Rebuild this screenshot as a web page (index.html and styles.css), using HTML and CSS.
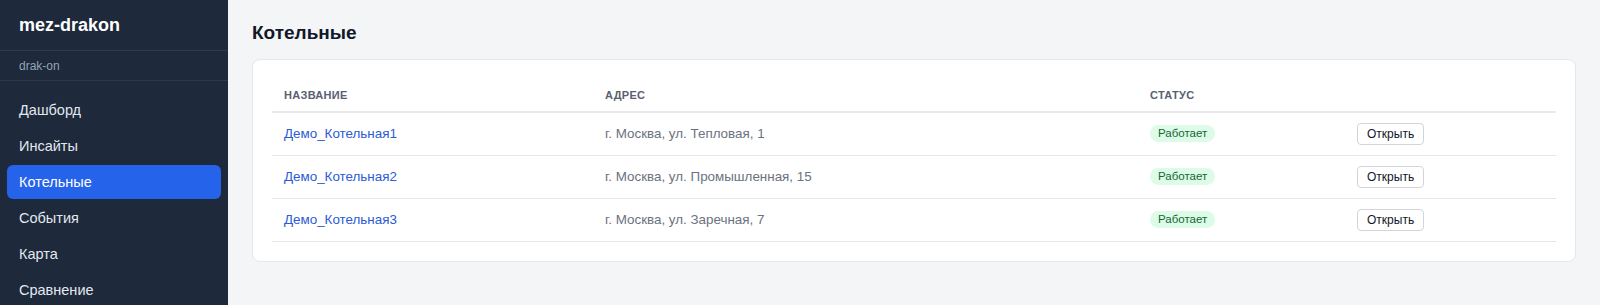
FILE: index.html
```html
<!DOCTYPE html>
<html lang="ru">
<head>
    <meta charset="UTF-8">
    <meta name="viewport" content="width=device-width, initial-scale=1.0">
    <title>Котельные</title>
    <link rel="stylesheet" href="styles.css">
</head>
<body>
    <div class="layout">
        <aside class="sidebar">
            <div class="brand">mez-drakon</div>
            <div class="tenant">drak-on</div>
            <nav class="menu">
                <a href="#" class="menu-item">Дашборд</a>
                <a href="#" class="menu-item">Инсайты</a>
                <a href="#" class="menu-item active">Котельные</a>
                <a href="#" class="menu-item">События</a>
                <a href="#" class="menu-item">Карта</a>
                <a href="#" class="menu-item">Сравнение</a>
            </nav>
        </aside>

        <main class="content">
            <h1 class="page-title">Котельные</h1>

            <div class="card">
                <table class="table">
                    <thead>
                        <tr>
                            <th class="col-name">Название</th>
                            <th class="col-addr">Адрес</th>
                            <th class="col-status">Статус</th>
                            <th></th>
                        </tr>
                    </thead>
                    <tbody>
                        <tr>
                            <td><a href="#" class="link">Демо_Котельная1</a></td>
                            <td class="muted">г. Москва, ул. Тепловая, 1</td>
                            <td><span class="badge">Работает</span></td>
                            <td><button class="btn">Открыть</button></td>
                        </tr>
                        <tr>
                            <td><a href="#" class="link">Демо_Котельная2</a></td>
                            <td class="muted">г. Москва, ул. Промышленная, 15</td>
                            <td><span class="badge">Работает</span></td>
                            <td><button class="btn">Открыть</button></td>
                        </tr>
                        <tr>
                            <td><a href="#" class="link">Демо_Котельная3</a></td>
                            <td class="muted">г. Москва, ул. Заречная, 7</td>
                            <td><span class="badge">Работает</span></td>
                            <td><button class="btn">Открыть</button></td>
                        </tr>
                    </tbody>
                </table>
            </div>
        </main>
    </div>
</body>
</html>
```

FILE: styles.css
```css
* {
    margin: 0;
    padding: 0;
    box-sizing: border-box;
    font-family: 'Liberation Sans', Arial, sans-serif;
}

body {
    background: #f4f5f7;
    color: #111827;
}

.layout {
    display: flex;
    min-height: 100vh;
}

/* Боковая панель */
.sidebar {
    width: 228px;
    flex-shrink: 0;
    background: #1e293b;
    color: #e5e7eb;
}

.brand {
    height: 51px;
    padding: 0 19px;
    display: flex;
    align-items: center;
    font-size: 18px;
    font-weight: 700;
    color: #fff;
    border-bottom: 1px solid #2c3a4f;
}

.tenant {
    height: 30px;
    padding: 0 19px;
    display: flex;
    align-items: center;
    font-size: 12px;
    color: #94a3b8;
    border-bottom: 1px solid #2c3a4f;
}

.menu {
    display: flex;
    flex-direction: column;
    gap: 2px;
    padding: 12px 7px;
}

.menu-item {
    display: block;
    height: 34px;
    line-height: 34px;
    padding: 0 12px;
    border-radius: 6px;
    color: #e2e8f0;
    text-decoration: none;
    font-size: 14.5px;
}

.menu-item.active {
    background: #2563eb;
    color: #fff;
}

/* Контент */
.content {
    flex: 1;
    padding: 20px 24px;
}

.page-title {
    font-size: 19px;
    font-weight: 700;
    line-height: 26px;
    margin-bottom: 13px;
}

.card {
    background: #fff;
    border: 1px solid #e5e7eb;
    border-radius: 8px;
    padding: 19px 19px;
}

.table {
    width: 100%;
    border-collapse: collapse;
    table-layout: fixed;
}

.table th {
    text-align: left;
    font-size: 11px;
    font-weight: 700;
    letter-spacing: 0.3px;
    text-transform: uppercase;
    color: #596170;
    height: 33px;
    padding: 0 12px;
    border-bottom: 2px solid #e8eaee;
}

.table td {
    height: 43px;
    padding: 0 12px;
    font-size: 13.4px;
    border-bottom: 1px solid #e5e7eb;
}

.col-name {
    width: 321px;
}

.col-addr {
    width: 545px;
}

.col-status {
    width: 207px;
}

.link {
    color: #2b5bd7;
    text-decoration: none;
}

.muted {
    color: #6b7280;
}

.badge {
    display: inline-block;
    padding: 2px 8px;
    border-radius: 9px;
    background: #dcfce7;
    color: #166534;
    font-size: 11.5px;
    line-height: 13px;
}

.btn {
    background: #fff;
    border: 1px solid #d1d5db;
    border-radius: 4px;
    padding: 0 9px;
    height: 22px;
    font-size: 12px;
    color: #111827;
    cursor: pointer;
}
```
